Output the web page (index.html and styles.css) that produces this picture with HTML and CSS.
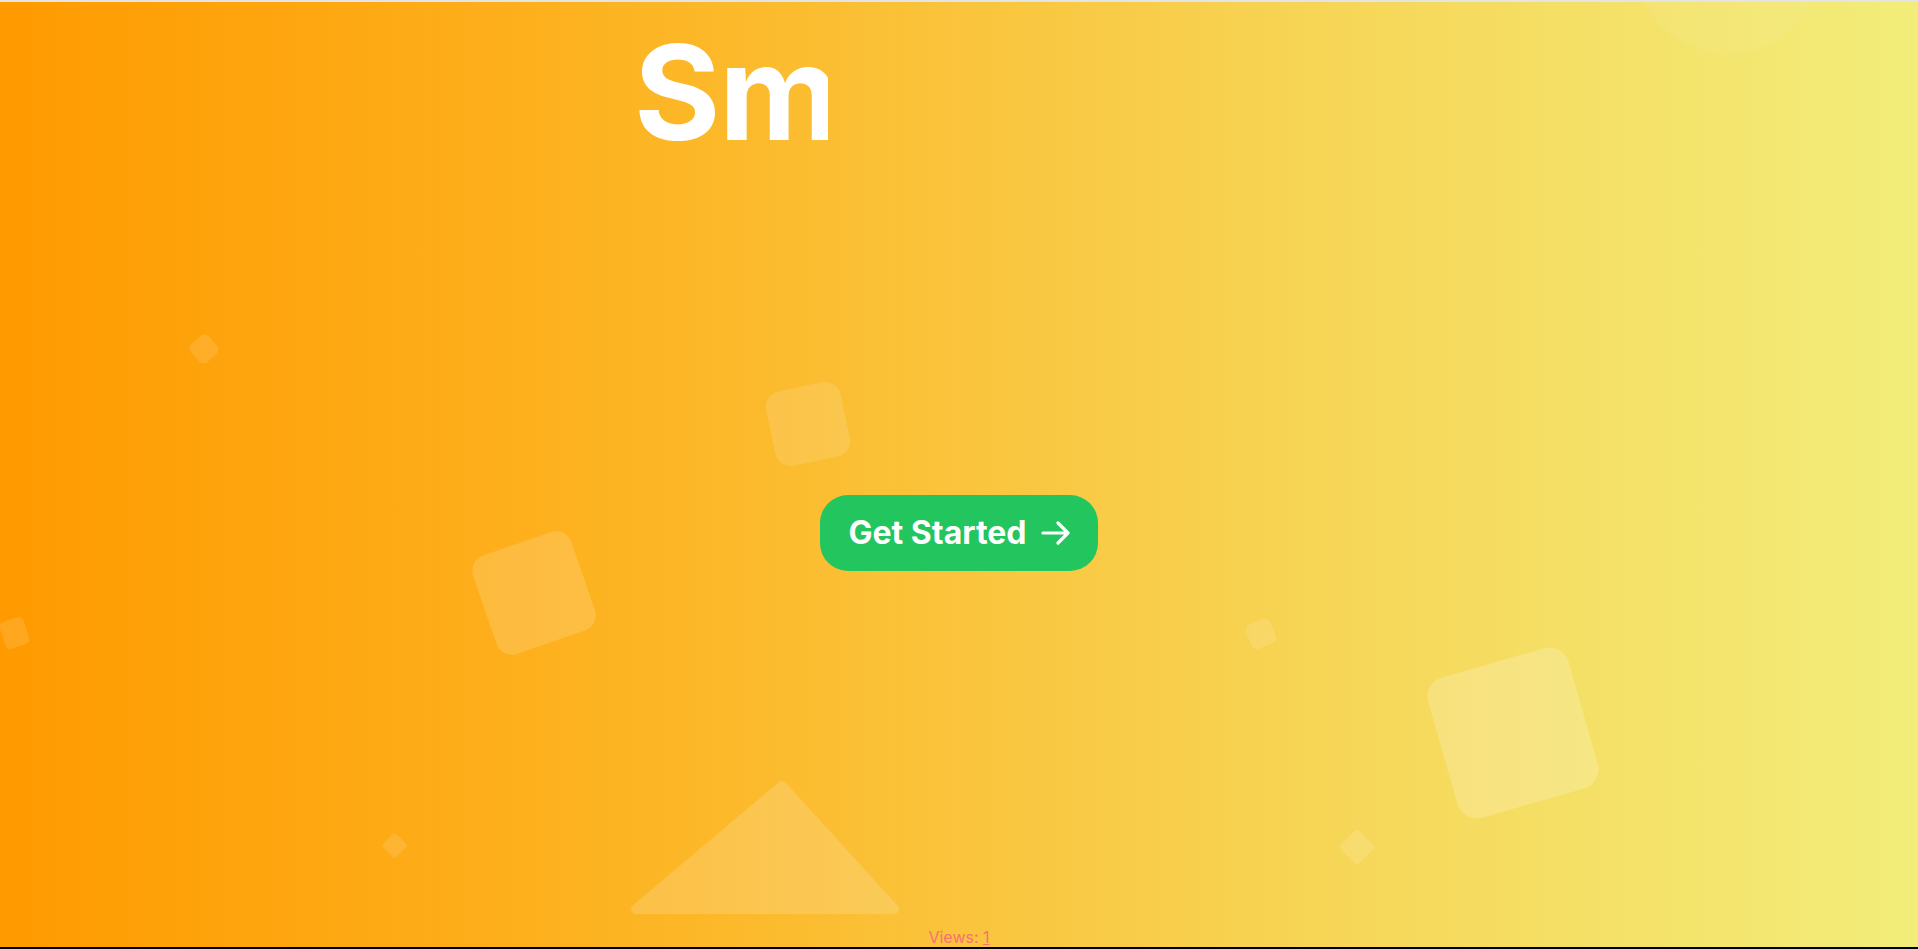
FILE: index.html
```html
<!DOCTYPE html>
<html lang="en">
<head>
<meta charset="utf-8">
<title>Sm</title>
<link rel="stylesheet" href="styles.css">
</head>
<body>
<div class="page">
  <div class="shapes" aria-hidden="true">
    <span class="shape s1"></span>
    <span class="shape s2"></span>
    <span class="shape s3"></span>
    <span class="shape s4"></span>
    <span class="shape s5"></span>
    <span class="shape s6"></span>
    <span class="shape s7"></span>
    <span class="shape s8"></span>
    <span class="circle"></span>
    <svg class="tri" width="300" height="160" viewBox="0 0 300 160">
      <polygon points="8,133 154,10 266,133" fill="#ffffff" stroke="#ffffff" stroke-width="10" stroke-linejoin="round"/>
    </svg>
  </div>
  <header class="hero">
    <h1 class="title">Sm</h1>
  </header>
  <main class="cta">
    <button class="btn" type="button">
      <span>Get Started</span>
      <svg class="arrow" width="29" height="24" viewBox="0 0 29 24" fill="none" stroke="#fff" stroke-width="3.2" stroke-linecap="round" stroke-linejoin="round"><path d="M2 12h25M17 2l10 10-10 10"/></svg>
    </button>
  </main>
  <footer class="views">Views: <a class="count" href="#">1</a></footer>
</div>
</body>
</html>
```
FILE: styles.css
```css
html, body {
  margin: 0;
  padding: 0;
}
body {
  font-family: Inter, "Liberation Sans", sans-serif;
  overflow: hidden;
}
.page {
  position: relative;
  height: 949px;
  box-sizing: border-box;
  border-top: 2px solid #e4e4e4;
  border-bottom: 2px solid #000;
  background: linear-gradient(90deg, #ff9a00 0%, #fdb21f 30%, #fac43c 50%, #f6d85a 72%, #f2ed7a 100%);
  overflow: hidden;
  display: flex;
  flex-direction: column;
}
.shapes {
  position: absolute;
  inset: 0;
  pointer-events: none;
}
.shape {
  position: absolute;
  display: block;
  background: rgba(255, 255, 255, 0.12);
}
.s1 { left: 192px; top: 335px; width: 24px; height: 24px; border-radius: 6px; transform: rotate(48deg); }
.s2 { left: 2px; top: 617px; width: 25px; height: 28px; border-radius: 5px; transform: rotate(-18deg); }
.s3 { left: 482px; top: 539px; width: 104px; height: 104px; border-radius: 16px; transform: rotate(-19deg); background: rgba(255,255,255,0.16); }
.s4 { left: 770px; top: 384px; width: 76px; height: 76px; border-radius: 16px; transform: rotate(-12deg); background: rgba(255,255,255,0.13); }
.s5 { left: 1248px; top: 619px; width: 26px; height: 26px; border-radius: 5px; transform: rotate(-22deg); }
.s6 { left: 1440px; top: 658px; width: 146px; height: 146px; border-radius: 20px; transform: rotate(-16deg); background: rgba(255,255,255,0.2); }
.s7 { left: 1344px; top: 832px; width: 26px; height: 26px; border-radius: 4px; transform: rotate(45deg); background: rgba(255,255,255,0.14); }
.s8 { left: 385px; top: 834px; width: 19px; height: 19px; border-radius: 3px; transform: rotate(45deg); background: rgba(255,255,255,0.12); }
.circle {
  position: absolute;
  left: 1634px;
  top: -136px;
  width: 188px;
  height: 188px;
  border-radius: 50%;
  background: rgba(255, 255, 255, 0.06);
}
.tri {
  position: absolute;
  left: 628px;
  top: 774px;
  opacity: 0.16;
}
.hero {
  position: relative;
  width: 650px;
  margin: 0 auto;
  padding-top: 24px;
}
.title {
  margin: 0;
  width: 194px;
  overflow: hidden;
  white-space: nowrap;
  font-size: 132px;
  line-height: 132px;
  font-weight: 700;
  color: #fff;
  letter-spacing: -0.01em;
}
.cta {
  position: relative;
  display: flex;
  justify-content: center;
  margin-top: 337px;
}
.btn {
  display: flex;
  align-items: center;
  gap: 14px;
  height: 76px;
  padding: 0 28px;
  border: 0;
  border-radius: 28px;
  background: #22c55e;
  color: #fff;
  font-family: Inter, "Liberation Sans", sans-serif;
  font-size: 32px;
  font-weight: 700;
  line-height: 38px;
  cursor: pointer;
}
.arrow {
  display: block;
}
.views {
  position: relative;
  margin-top: auto;
  text-align: center;
  font-size: 16px;
  line-height: 20px;
  color: #f87171;
}
.count {
  color: #f87171;
  text-decoration: underline;
}
```
